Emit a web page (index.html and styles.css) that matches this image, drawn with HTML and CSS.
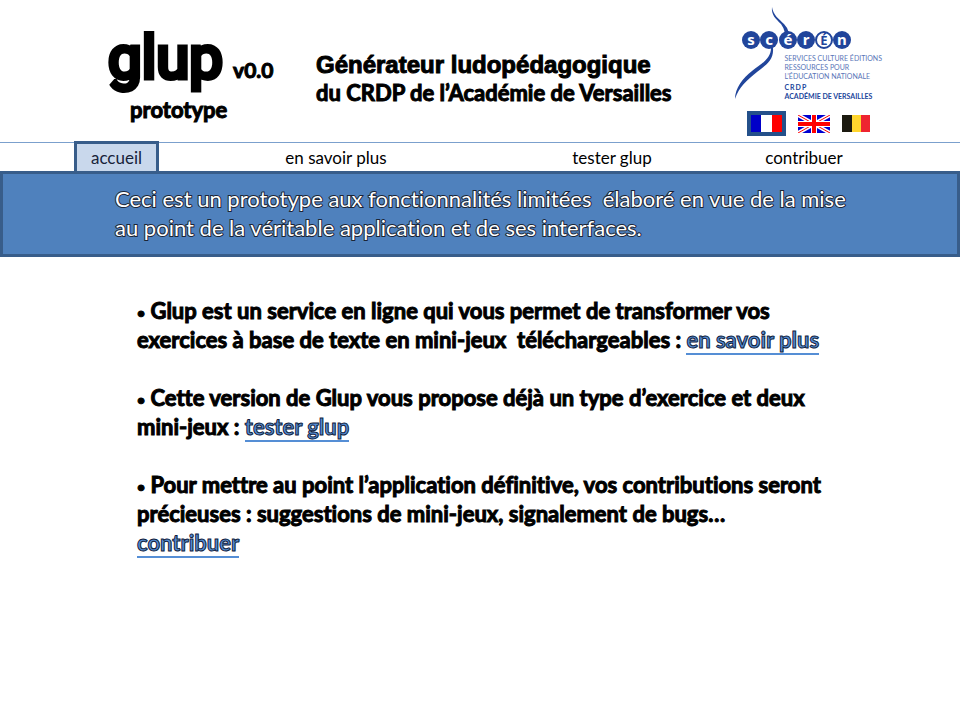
FILE: index.html
```
<!DOCTYPE html>
<html lang="fr">
<head>
<meta charset="utf-8">
<title>glup prototype</title>
<link rel="stylesheet" href="styles.css">
</head>
<body>
<header class="header">
  <div class="brand">
    <div class="brand-row"><span class="logo">glup</span><span class="version">v0.0</span></div>
    <div class="stage">prototype</div>
  </div>
  <h1 class="tagline"><span class="tagline-main">Générateur ludopédagogique</span><span class="tagline-sub">du CRDP de l’Académie de Versailles</span></h1>
  <div class="aside">
    <div class="partner">
      <svg class="partner-mark" viewBox="0 0 120 94" role="img" aria-label="scérén">
        <g fill="#21459b">
          <path d="M37 0C38 8 44 12 49 17Q53 21 54 26L50 26Q49 21 46 17C41 12 36 8 37 0Z"/>
          <path d="M38 41C39 53 31 58 22 65C12 73 4 80 0 92C0 81 8 71 17 64C26 57 36 52 36 41Z"/>
          <circle cx="16" cy="33" r="9"/><circle cx="34" cy="33" r="9"/><circle cx="53" cy="33" r="9"/><circle cx="71" cy="33" r="9"/><circle cx="107" cy="33" r="9"/>
        </g>
        <circle cx="89" cy="33" r="8" fill="#fff" stroke="#21459b" stroke-width="2"/>
        <g class="mark-letters">
          <text x="16" y="38">s</text><text x="34" y="38">c</text><text x="53" y="38">é</text><text x="71" y="38">r</text><text class="mark-dark" x="89" y="38">É</text><text x="107" y="38">n</text>
        </g>
      </svg>
      <p class="partner-text">SERVICES CULTURE ÉDITIONS<br>RESSOURCES POUR<br>L’ÉDUCATION NATIONALE</p>
      <p class="partner-text partner-strong"><span class="crdp">CRDP</span><br>ACADÉMIE DE VERSAILLES</p>
    </div>
    <div class="flags">
      <button class="flag flag-active" type="button" aria-label="Français">
        <svg width="31" height="17" viewBox="0 0 31 17"><path fill="#0000c8" d="M0 0h10v17H0z"/><path fill="#fff" d="M10 0h11v17H10z"/><path fill="#f00" d="M21 0h10v17H21z"/></svg>
      </button>
      <button class="flag" type="button" aria-label="English">
        <svg width="32" height="18" viewBox="0 0 32 18"><path fill="#0000d0" d="M0 0h32v18H0z"/><path d="M0 0L32 18M32 0L0 18" stroke="#fff" stroke-width="4"/><path d="M0 0L32 18M32 0L0 18" stroke="#f00" stroke-width="1"/><path d="M16 0v18M0 9h32" stroke="#fff" stroke-width="6"/><path d="M16 0v18M0 9h32" stroke="#f00" stroke-width="4"/></svg>
      </button>
      <button class="flag" type="button" aria-label="Belgique">
        <svg width="28" height="17" viewBox="0 0 28 17"><path fill="#1c1a10" d="M0 0h10v17H0z"/><path fill="#ffd52e" d="M10 0h9v17h-9z"/><path fill="#ee2430" d="M19 0h9v17h-9z"/></svg>
      </button>
    </div>
  </div>
</header>
<nav class="nav">
  <a class="tab tab-active" href="#accueil">accueil</a>
  <a class="tab" href="#savoir">en savoir plus</a>
  <a class="tab" href="#tester">tester glup</a>
  <a class="tab" href="#contribuer">contribuer</a>
</nav>
<div class="banner">
  <p>Ceci est un prototype aux fonctionnalités limitées&nbsp; élaboré en vue de la mise<br>au point de la véritable application et de ses interfaces.</p>
</div>
<main class="content">
  <p><span class="bullet">•</span> Glup est un service en ligne qui vous permet de transformer vos<br>exercices à base de texte en mini-jeux&nbsp; téléchargeables : <a href="#savoir">en savoir plus</a></p>
  <p><span class="bullet">•</span> Cette version de Glup vous propose déjà un type d’exercice et deux<br>mini-jeux : <a href="#tester">tester glup</a></p>
  <p><span class="bullet">•</span> Pour mettre au point l’application définitive, vos contributions seront<br>précieuses : suggestions de mini-jeux, signalement de bugs…<br><a href="#contribuer">contribuer</a></p>
</main>
</body>
</html>
```
FILE: styles.css
```
* { box-sizing: border-box; }
body {
  margin: 0;
  background: #fff;
  color: #000;
  font-family: Lato, "Liberation Sans", sans-serif;
  font-variant-ligatures: none;
}
p, h1 { margin: 0; }
.header {
  display: flex;
  align-items: flex-start;
  padding: 0 78px 0 108px;
  height: 142px;
}
.brand { flex: 0 0 208px; padding-top: 20px; }
.brand-row { display: flex; align-items: baseline; gap: 10px; line-height: 76px; height: 76px; }
.logo {
  font-family: Roboto, sans-serif;
  font-size: 60px;
  font-weight: 400;
  -webkit-text-stroke: 5px #000;
  stroke-linejoin: round;
}
.version { font-size: 21px; font-weight: 700; -webkit-text-stroke: 1px #000; }
.stage {
  padding-left: 22px;
  font-size: 22px;
  font-weight: 700;
  line-height: 28px;
  -webkit-text-stroke: 1px #000;
}
.tagline {
  flex: 1;
  padding-top: 51px;
  font-size: 22px;
  line-height: 28px;
  white-space: nowrap;
  -webkit-text-stroke: 1px #000;
}
.tagline span { display: block; }
.tagline-main { font-family: "Liberation Sans", Arial, sans-serif; font-size: 24px; }
.aside { flex: 0 0 144px; padding-top: 7px; }
.partner { display: grid; padding-top: 47px; position: relative; }
.partner-mark { position: absolute; left: 0; top: 0; width: 120px; height: 94px; }
.mark-letters {
  fill: #fff;
  font-family: "Noto Sans", sans-serif;
  font-size: 15px;
  font-weight: 700;
  text-anchor: middle;
}
.mark-dark { fill: #21459b; font-size: 13px; }
.partner-text {
  padding-left: 49px;
  color: #5a76b8;
  font-size: 7px;
  line-height: 9px;
  white-space: nowrap;
}
.partner-strong { padding-top: 2px; color: #21459b; font-weight: 700; }
.crdp { letter-spacing: 1px; }
.flags { display: flex; align-items: center; justify-content: space-between; padding: 10px 12px 0 12px; }
.flag { display: block; border: 0; padding: 0; background: none; line-height: 0; }
.flag-active { padding: 4px; background: #24508a; }
.nav {
  display: grid;
  grid-template-columns: 85fr 354fr 198fr 186fr;
  padding: 0 63px 0 74px;
  border-top: 1px solid #7ba0cd;
}
.tab {
  height: 28px;
  color: #000;
  font-size: 17px;
  line-height: 29px;
  text-align: center;
  text-decoration: none;
}
.tab-active {
  height: 30px;
  margin-top: -2px;
  border: 3px solid #385d8a;
  border-bottom: 0;
  background: #c9d8ec;
  color: #17233a;
  line-height: 27px;
}
.banner {
  padding: 10px 20px 12px 112px;
  border: 3px solid #385d8a;
  background: #4f81bd;
  color: #fff;
  font-size: 22px;
  line-height: 29px;
}
.banner p {
  -webkit-text-stroke: 2px #1c2535;
  paint-order: stroke fill;
}
.content {
  display: grid;
  gap: 29px;
  padding: 39px 20px 40px 137px;
  font-size: 22px;
  font-weight: 700;
  line-height: 29px;
  -webkit-text-stroke: 1px #000;
}
.bullet { font-size: 14px; line-height: 14px; vertical-align: middle; }
.content a {
  color: #558ed5;
  -webkit-text-stroke: 1px #10203c;
  border-bottom: 2px solid #558ed5;
  text-decoration: none;
}
```
